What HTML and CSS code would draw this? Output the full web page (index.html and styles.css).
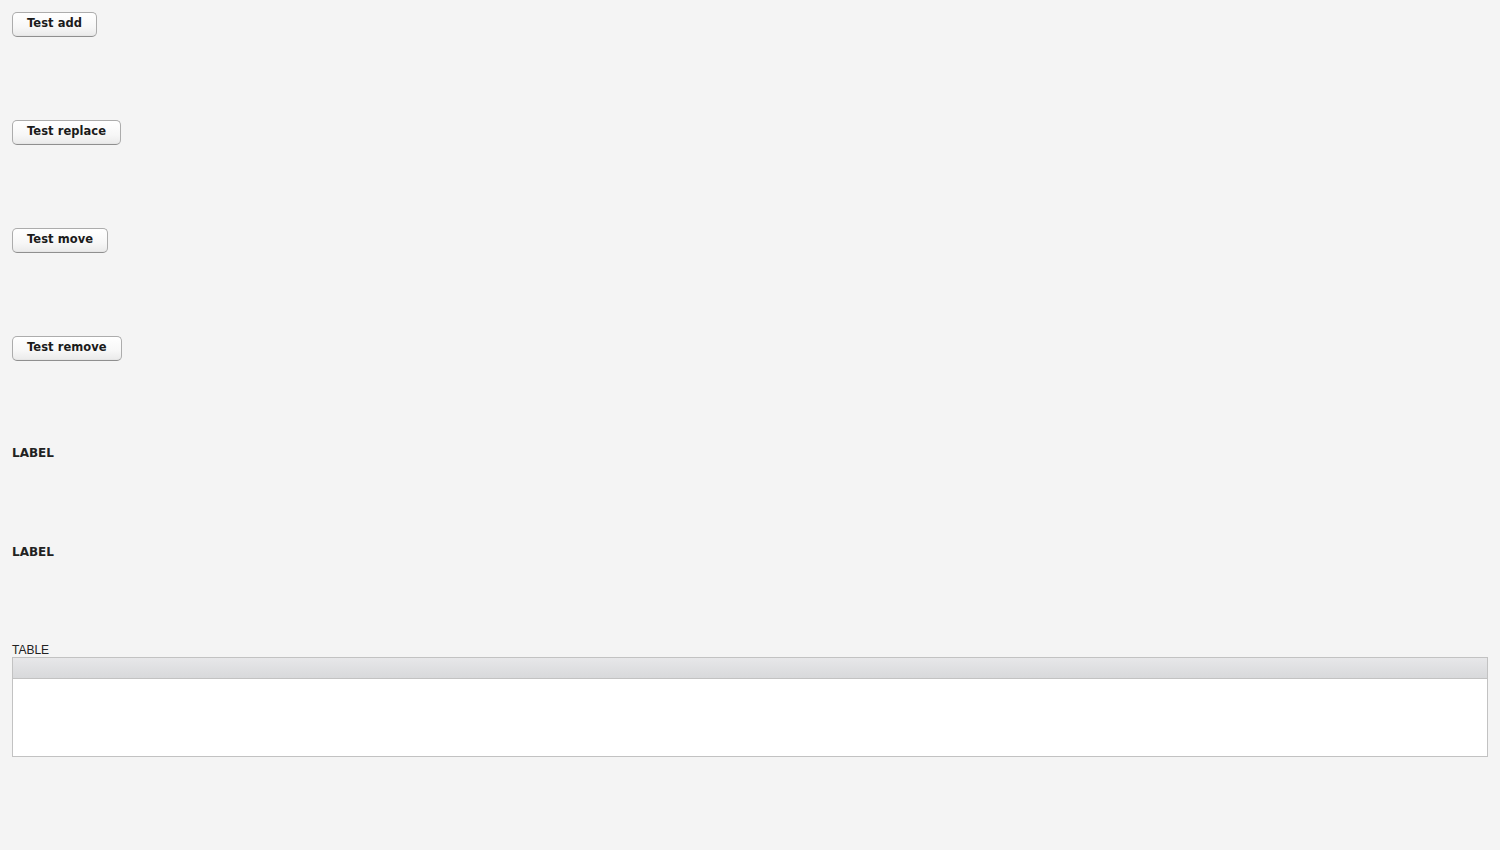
FILE: index.html
```html
<!DOCTYPE html>
<html>
<head>
<meta charset="utf-8">
<link rel="stylesheet" href="styles.css">
</head>
<body>
<div class="layout">
  <div class="slot slot-btn"><button class="btn">Test add</button></div>
  <div class="slot slot-btn"><button class="btn">Test replace</button></div>
  <div class="slot slot-btn"><button class="btn">Test move</button></div>
  <div class="slot slot-btn"><button class="btn">Test remove</button></div>
  <div class="slot slot-label"><div class="label">LABEL</div></div>
  <div class="slot slot-label"><div class="label">LABEL</div></div>
  <div class="slot slot-table">
    <div class="caption">TABLE</div>
    <div class="table">
      <div class="thead"></div>
      <div class="tbody"></div>
    </div>
  </div>
</div>
</body>
</html>
```
FILE: styles.css
```css
html, body {
  margin: 0;
  padding: 0;
  background: #f4f4f4;
  width: 1500px;
  height: 850px;
  overflow: hidden;
}
.layout {
  display: flex;
  flex-direction: column;
  padding: 12px;
}
.slot-btn {
  height: 108px;
}
.slot-label {
  height: 99px;
}
.btn {
  display: block;
  height: 25px;
  padding: 0 14px 3px;
  margin: 0;
  border: 1px solid #acacac;
  border-bottom-color: #8f8f8f;
  border-radius: 5px;
  background: linear-gradient(#ffffff, #f7f7f7 60%, #eaeaea);
  box-shadow: inset 0 -1px 0 #e6e6e6;
  font-family: "DejaVu Sans", sans-serif;
  font-weight: bold;
  font-size: 11.5px;
  letter-spacing: 0.05px;
  color: #1b1b1b;
  line-height: 21px;
}
.label {
  font-family: "DejaVu Sans", sans-serif;
  font-weight: bold;
  font-size: 12px;
  line-height: 16px;
  color: #222;
  padding-top: 1px;
}
.caption {
  font-family: "Liberation Sans", Arial, sans-serif;
  font-size: 12px;
  line-height: 15px;
  color: #222;
  padding-top: 1px;
  margin-bottom: -1px;
}
.table {
  width: 1474px;
  border: 1px solid #c2c2c2;
  background: #fff;
}
.thead {
  height: 20px;
  background: linear-gradient(#e7e7e9, #d8d9db);
  border-bottom: 1px solid #c2c2c2;
}
.tbody {
  height: 77px;
}
```
